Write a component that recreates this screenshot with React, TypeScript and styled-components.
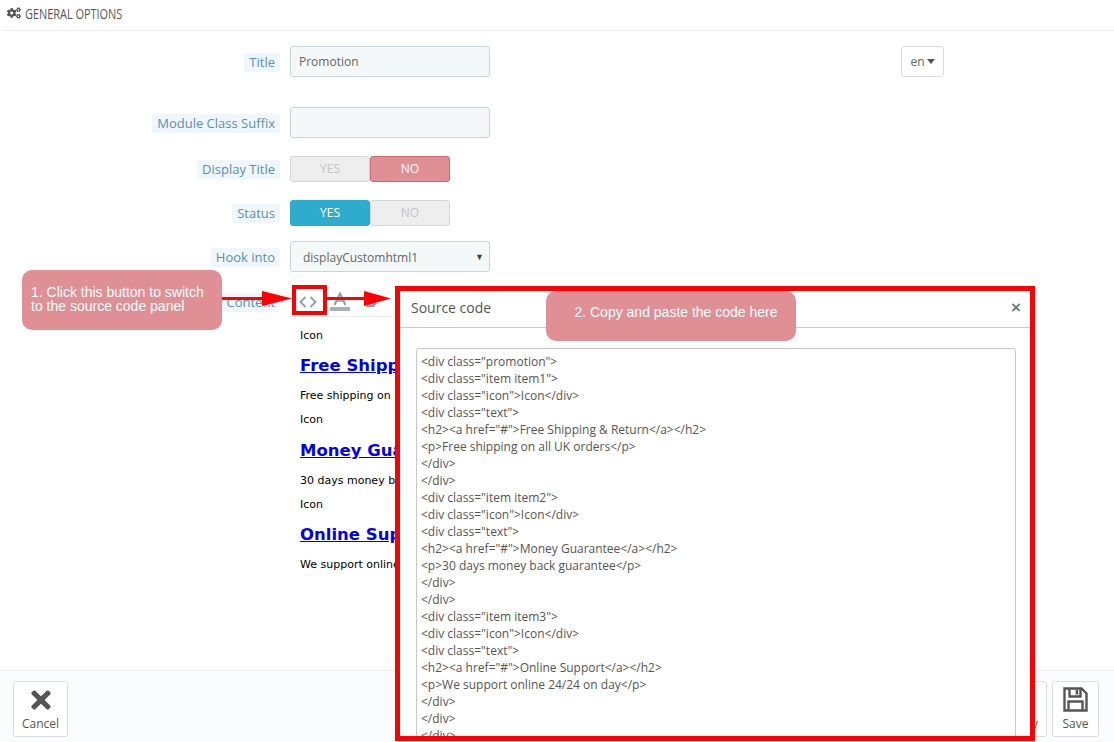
import React from 'react';
import styled, { createGlobalStyle } from 'styled-components';
import { FaCogs, FaTimes } from 'react-icons/fa';

const SOURCE_LINES = [
  '<div class="promotion">',
  '<div class="item item1">',
  '<div class="icon">Icon</div>',
  '<div class="text">',
  '<h2><a href="#">Free Shipping & Return</a></h2>',
  '<p>Free shipping on all UK orders</p>',
  '</div>',
  '</div>',
  '<div class="item item2">',
  '<div class="icon">Icon</div>',
  '<div class="text">',
  '<h2><a href="#">Money Guarantee</a></h2>',
  '<p>30 days money back guarantee</p>',
  '</div>',
  '</div>',
  '<div class="item item3">',
  '<div class="icon">Icon</div>',
  '<div class="text">',
  '<h2><a href="#">Online Support</a></h2>',
  '<p>We support online 24/24 on day</p>',
  '</div>',
  '</div>',
  '</div>',
];

const PROMOS = [
  { title: 'Free Shipping & Return', text: 'Free shipping on all UK orders' },
  { title: 'Money Guarantee', text: '30 days money back guarantee' },
  { title: 'Online Support', text: 'We support online 24/24 on day' },
];

const Arrow: React.FC<{ left: number; top: number; width: number; head: number }> = ({
  left,
  top,
  width,
  head,
}) => (
  <ArrowSvg $left={left} $top={top} width={width} height={15} viewBox={`0 0 ${width} 15`}>
    <rect x="0" y="6" width={width - head} height="3" fill="#ff0000" />
    <polygon points={`${width - head},0 ${width},7.5 ${width - head},15`} fill="#ff0000" />
  </ArrowSvg>
);

const App: React.FC = () => {
  return (
    <Page>
      <GlobalStyle />
      <PanelHeading>
        <FaCogs size={14} />
        <HeadingText>GENERAL OPTIONS</HeadingText>
      </PanelHeading>

      <Form>
        <Row $top={15}>
          <LabelCell>
            <Label>Title</Label>
          </LabelCell>
          <Input>Promotion</Input>
          <LangButton>
            en
            <Caret />
          </LangButton>
        </Row>
        <Row $top={30}>
          <LabelCell>
            <Label>Module Class Suffix</Label>
          </LabelCell>
          <Input />
        </Row>
        <Row $top={18}>
          <LabelCell>
            <Label>Display Title</Label>
          </LabelCell>
          <Switch>
            <SwitchPart>YES</SwitchPart>
            <SwitchPart $active="no">NO</SwitchPart>
          </Switch>
        </Row>
        <Row $top={18}>
          <LabelCell>
            <Label>Status</Label>
          </LabelCell>
          <Switch>
            <SwitchPart $active="yes">YES</SwitchPart>
            <SwitchPart>NO</SwitchPart>
          </Switch>
        </Row>
        <Row $top={15}>
          <LabelCell>
            <Label>Hook into</Label>
          </LabelCell>
          <Select>
            displayCustomhtml1
            <SelectCaret>▼</SelectCaret>
          </Select>
        </Row>
        <ContentRow>
          <ContentLabelCell>
            <Label>Content</Label>
          </ContentLabelCell>
          <Editor>
            <Toolbar>
              <ToolIcon>
                <svg width="18" height="14" viewBox="0 0 18 14" fill="none" stroke="#8aa0ad" strokeWidth="1.8">
                  <polyline points="6.5,2 1.5,7 6.5,12" />
                  <polyline points="11.5,2 16.5,7 11.5,12" />
                </svg>
              </ToolIcon>
              <ToolIcon>
                <svg width="20" height="20" viewBox="0 0 20 20" fill="none">
                  <polyline points="4.5,13 10,1.5 15.5,13" stroke="#8aa0ad" strokeWidth="2" />
                  <line x1="6.5" y1="9" x2="13.5" y2="9" stroke="#8aa0ad" strokeWidth="1.6" />
                  <rect x="0" y="15" width="20" height="4" fill="#a6b2b9" />
                </svg>
              </ToolIcon>
              <ToolIcon>
                <svg width="16" height="20" viewBox="0 0 16 20">
                  <polygon points="3,14 9,8 14,11 11,15 3,15" fill="#8aa0ad" />
                </svg>
              </ToolIcon>
            </Toolbar>
            <EditorBody>
              {PROMOS.map((promo) => (
                <div key={promo.title}>
                  <EditorText>Icon</EditorText>
                  <EditorTitle>
                    <EditorLink href="#">{promo.title}</EditorLink>
                  </EditorTitle>
                  <EditorText>{promo.text}</EditorText>
                </div>
              ))}
            </EditorBody>
          </Editor>
        </ContentRow>
      </Form>

      <Footer>
        <FooterButton>
          <FooterIcon>
            <FaTimes size={28} />
          </FooterIcon>
          Cancel
        </FooterButton>
        <FooterRight>
          <FooterButton>
            <FooterIcon />
            Save and stay
          </FooterButton>
          <FooterButton $wide>
            <FooterIcon>
              <svg width="25" height="25" viewBox="0 0 25 25" fill="none" stroke="#555" strokeWidth="2.4">
                <path d="M1.5 1.5H18.5L23.5 6.5V23.5H1.5Z" />
                <path d="M6.5 1.5V9.5H17.5V1.5" />
                <rect x="12.6" y="3" width="2.6" height="4.5" fill="#555" stroke="none" />
                <path d="M5.5 23.5V14.5H19.5V23.5" />
              </svg>
            </FooterIcon>
            Save
          </FooterButton>
        </FooterRight>
      </Footer>

      <Callout $left={22} $top={270} $width={200} $height={60}>
        1. Click this button to switch
        <br />
        to the source code panel
      </Callout>
      <Arrow left={222} top={291} width={70} head={30} />
      <HighlightBox />
      <Arrow left={327} top={291} width={64} head={27} />

      <Modal>
        <ModalHeader>
          <ModalTitle>Source code</ModalTitle>
          <ModalClose>×</ModalClose>
        </ModalHeader>
        <ModalBody>
          <CodeBox>
            {SOURCE_LINES.map((line, i) => (
              <CodeLine key={i}>{line}</CodeLine>
            ))}
          </CodeBox>
        </ModalBody>
      </Modal>

      <Callout $left={546} $top={291} $width={250} $height={50} $center>
        2. Copy and paste the code here
      </Callout>
    </Page>
  );
};

export default App;

const GlobalStyle = createGlobalStyle`
  html, body {
    margin: 0;
    padding: 0;
    background: #fff;
    overflow: hidden;
  }
  * {
    box-sizing: border-box;
  }
`;

const Page = styled.div`
  position: relative;
  width: 1114px;
  height: 742px;
  overflow: hidden;
  display: flex;
  flex-direction: column;
  font-family: 'Open Sans', sans-serif;
  font-size: 12px;
  color: #666;
  background: #fff;
`;

const PanelHeading = styled.div`
  display: flex;
  align-items: center;
  gap: 4px;
  height: 31px;
  margin: 0 0 0 2px;
  padding: 0 0 4px 5px;
  border-bottom: 1px solid #eeeeee;
  color: #555;
`;

const HeadingText = styled.span`
  display: inline-block;
  font-size: 14px;
  transform: scaleX(0.78);
  transform-origin: left center;
  white-space: nowrap;
`;

const Form = styled.div`
  flex: 1;
  overflow: hidden;
`;

const Row = styled.div<{ $top: number }>`
  display: grid;
  grid-template-columns: 280px 200px 391px 43px;
  column-gap: 10px;
  align-items: center;
  margin-top: ${(p) => p.$top}px;
`;

const LabelCell = styled.div`
  display: flex;
  justify-content: flex-end;
  padding-top: 1.5px;
`;

const Label = styled.span`
  height: 19px;
  padding: 0 5px;
  line-height: 19px;
  font-size: 13px;
  color: #5d8db3;
  background: #eff7fd;
  border-radius: 2px;
  white-space: nowrap;
`;

const Input = styled.div`
  width: 200px;
  height: 31px;
  padding: 0 8px;
  line-height: 29px;
  font-size: 12px;
  color: #666;
  background: #f5f8f9;
  border: 1px solid #c7d6db;
  border-radius: 3px;
`;

const LangButton = styled.div`
  grid-column: 4;
  display: flex;
  align-items: center;
  justify-content: center;
  gap: 2px;
  height: 31px;
  font-size: 12px;
  color: #666;
  border: 1px solid #dddddd;
  border-radius: 3px;
`;

const Caret = styled.span`
  width: 0;
  height: 0;
  margin-top: -1px;
  border-left: 4.5px solid transparent;
  border-right: 4.5px solid transparent;
  border-top: 5px solid #555;
`;

const Switch = styled.div`
  display: flex;
  width: 160px;
  height: 26px;
`;

const SwitchPart = styled.div<{ $active?: 'yes' | 'no' }>`
  flex: 1;
  text-align: center;
  line-height: 24px;
  font-size: 12px;
  border-radius: 3px;
  color: ${(p) => (p.$active ? '#fff' : '#c3c3c3')};
  background: ${(p) => (p.$active === 'yes' ? '#2eacce' : p.$active === 'no' ? '#e08f95' : '#eeeeee')};
  border: 1px solid ${(p) => (p.$active === 'yes' ? '#2eacce' : p.$active === 'no' ? '#c96a72' : '#d5d5d5')};
`;

const Select = styled.div`
  position: relative;
  width: 200px;
  height: 31px;
  padding: 0 12px;
  line-height: 31px;
  font-size: 12px;
  color: #666;
  background: #f5f8f9;
  border: 1px solid #c7d6db;
  border-radius: 3px;
`;

const SelectCaret = styled.span`
  position: absolute;
  top: -1px;
  right: 5px;
  font-size: 9px;
  color: #444;
`;

const ContentRow = styled.div`
  display: grid;
  grid-template-columns: 280px 1fr;
  column-gap: 10px;
  margin-top: 13px;
`;

const ContentLabelCell = styled(LabelCell)`
  padding-top: 8px;
  align-items: flex-start;
`;

const Editor = styled.div`
  width: 200px;
`;

const Toolbar = styled.div`
  display: flex;
  align-items: flex-end;
  width: 140px;
  height: 32px;
  padding: 0 0 4px 9px;
  border-bottom: 1px solid #eeeeee;
  gap: 13px;
`;

const ToolIcon = styled.span`
  display: flex;
  align-items: center;
  height: 20px;
`;

const EditorBody = styled.div`
  width: 600px;
  padding: 12px 0 0 10px;
  font-family: 'DejaVu Sans', Verdana, sans-serif;
  font-size: 11px;
  color: #000;
`;

const EditorText = styled.p`
  margin: 0 0 11px;
`;

const EditorTitle = styled.h2`
  margin: 14.2px 0;
  font-size: 16.5px;
  font-weight: bold;
`;

const EditorLink = styled.a`
  color: #0000ee;
  text-decoration: underline;
`;

const Footer = styled.div`
  flex: none;
  display: flex;
  justify-content: space-between;
  height: 72px;
  padding: 10px 15px 0 13px;
  background: #fafbfc;
  border-top: 1px solid #eeeeee;
`;

const FooterRight = styled.div`
  display: flex;
  gap: 5px;
`;

const FooterButton = styled.div<{ $wide?: boolean }>`
  display: flex;
  flex-direction: column;
  align-items: center;
  height: 56px;
  padding: 0 ${(p) => (p.$wide ? 9.5 : 8)}px;
  font-size: 12px;
  line-height: 16px;
  color: #555;
  background: #fff;
  border: 1px solid #dddddd;
  border-radius: 3px;
  white-space: nowrap;
`;

const FooterIcon = styled.div`
  display: flex;
  align-items: center;
  justify-content: center;
  height: 33px;
  margin-top: 1px;
  color: #555;
`;

const Callout = styled.div<{ $left: number; $top: number; $width: number; $height: number; $center?: boolean }>`
  position: absolute;
  z-index: 3;
  left: ${(p) => p.$left}px;
  top: ${(p) => p.$top}px;
  width: ${(p) => p.$width}px;
  height: ${(p) => p.$height}px;
  display: flex;
  align-items: center;
  justify-content: ${(p) => (p.$center ? 'center' : 'flex-start')};
  padding: 0 0 ${(p) => (p.$center ? 8 : 2)}px ${(p) => (p.$center ? 10 : 9)}px;
  font-family: 'Liberation Sans', Arial, sans-serif;
  font-size: 14px;
  line-height: 14px;
  color: #fff;
  background: #e08f95;
  border-radius: 10px;
`;

const ArrowSvg = styled.svg<{ $left: number; $top: number }>`
  position: absolute;
  z-index: 2;
  left: ${(p) => p.$left}px;
  top: ${(p) => p.$top}px;
`;

const HighlightBox = styled.div`
  position: absolute;
  z-index: 2;
  left: 292px;
  top: 285px;
  width: 35px;
  height: 30px;
  border: 4px solid #ff0000;
`;

const Modal = styled.div`
  position: absolute;
  z-index: 1;
  left: 395px;
  top: 286px;
  width: 640px;
  height: 455px;
  display: flex;
  flex-direction: column;
  overflow: hidden;
  background: #fff;
  border: 5px solid #ff0000;
`;

const ModalHeader = styled.div`
  flex: none;
  display: flex;
  align-items: center;
  justify-content: space-between;
  height: 37px;
  padding: 0 9px 3px 11px;
  border-bottom: 1px solid #c9c9c9;
`;

const ModalTitle = styled.span`
  font-size: 14px;
  color: #555;
`;

const ModalClose = styled.span`
  font-family: 'Liberation Sans', Arial, sans-serif;
  font-size: 17px;
  font-weight: bold;
  color: #777;
`;

const ModalBody = styled.div`
  flex: 1;
  min-height: 0;
  padding: 20px 14px 0 16px;
`;

const CodeBox = styled.div`
  height: 460px;
  padding: 4px 4px;
  background: #fff;
  border: 1px solid #c9c9c9;
  border-radius: 3px;
`;

const CodeLine = styled.div`
  height: 17px;
  line-height: 17px;
  font-size: 12px;
  color: #555;
  white-space: pre;
`;
